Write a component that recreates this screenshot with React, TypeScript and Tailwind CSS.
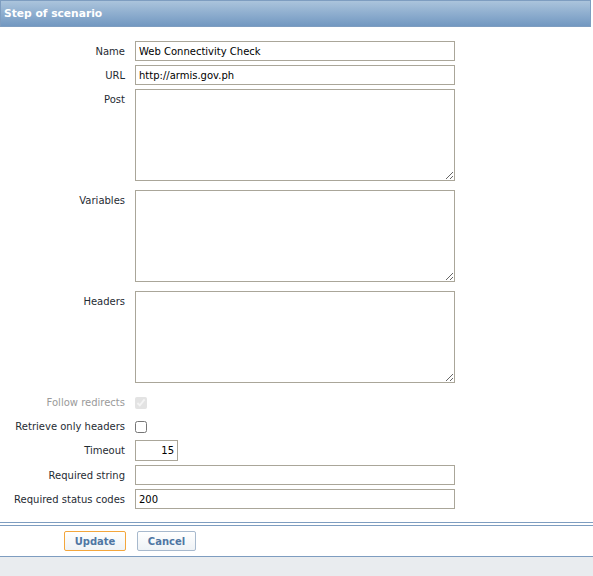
import React from 'react';

const font = { fontFamily: '"DejaVu Sans", Verdana, sans-serif' };

const Row: React.FC<{ label: string; muted?: boolean; children: React.ReactNode }> = ({ label, muted, children }) => (
  <div className="flex items-start gap-[10px]">
    <div className={`h-[20px] w-[125px] shrink-0 text-right leading-[22px] ${muted ? 'text-[#9a9a9a]' : 'text-[#1f2c33]'}`}>
      {label}
    </div>
    <div className="flex min-h-[20px] items-center">{children}</div>
  </div>
);

const inputCls =
  'h-[20px] border border-[#aaa699] bg-white px-[3px] text-[10px] text-black outline-none';

const areaCls = 'mb-[5px] h-[92px] w-[320px] border border-[#aaa699] bg-white';

export default function App() {
  return (
    <div className="min-h-[576px] bg-[#e9ecef] text-[10px]" style={font}>
      <div className="bg-white">
        <div className="mr-[2px] h-[27px] border border-[#7e9dc0] bg-gradient-to-b from-[#abc4dc] to-[#7298c1] pl-[3px] text-[10.7px] font-bold leading-[25px] text-white">
          Step of scenario
        </div>

        <div className="flex flex-col gap-[4px] pt-[14px]">
          <Row label="Name">
            <input className={`${inputCls} w-[320px]`} defaultValue="Web Connectivity Check" />
          </Row>
          <Row label="URL">
            <input className={`${inputCls} w-[320px]`} defaultValue="http://armis.gov.ph" />
          </Row>
          <Row label="Post">
            <textarea className={areaCls} />
          </Row>
          <Row label="Variables">
            <textarea className={areaCls} />
          </Row>
          <Row label="Headers">
            <textarea className={areaCls} />
          </Row>
          <Row label="Follow redirects" muted>
            <input type="checkbox" defaultChecked disabled className="m-0 mt-[1px] h-[12px] w-[12px] opacity-60" />
          </Row>
          <Row label="Retrieve only headers">
            <input type="checkbox" className="m-0 mt-[1px] h-[12px] w-[12px]" />
          </Row>
          <Row label="Timeout">
            <input className={`${inputCls} h-[21px] w-[43px] text-right`} defaultValue="15" />
          </Row>
          <Row label="Required string">
            <input className={`${inputCls} w-[320px]`} defaultValue="" />
          </Row>
          <Row label="Required status codes">
            <input className={`${inputCls} w-[320px]`} defaultValue="200" />
          </Row>
        </div>

        <div className="mt-[13px] h-[4px] border-y border-[#7e9dc0]" />

        <div className="flex gap-[11px] pb-[5px] pl-[64px] pt-[5px]">
          <button className="h-[20px] w-[62px] rounded-[2px] border border-[#f3a63c] bg-gradient-to-b from-white to-[#eef2f6] text-[10px] font-bold text-[#4f76a3]">
            Update
          </button>
          <button className="h-[20px] w-[59px] rounded-[2px] border border-[#a7b9cd] bg-gradient-to-b from-white to-[#eef2f6] text-[10px] font-bold text-[#4f76a3]">
            Cancel
          </button>
        </div>
      </div>
      <div className="border-t border-[#7e9dc0]" />
    </div>
  );
}
